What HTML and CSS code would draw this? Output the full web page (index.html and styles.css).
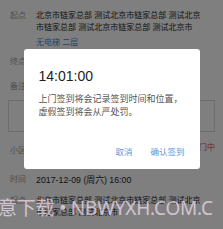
FILE: index.html
```html
<!DOCTYPE html>
<html lang="zh">
<head>
<meta charset="utf-8">
<link rel="stylesheet" href="styles.css">
</head>
<body>
<div class="page">
  <div class="row r1">
    <div class="label">起点</div>
    <div class="value">
      <div>北京市链家总部 测试北京市链家总部 测试北京</div>
      <div>市链家总部 测试北京市链家总部 测试北京市</div>
      <div class="tag">无电梯 二层</div>
    </div>
  </div>
  <div class="row r2">
    <div class="label">终点</div>
    <div class="value">北京市链家总部 测试北京市</div>
  </div>
  <div class="row r3">
    <div class="label">备注</div>
  </div>
  <div class="box"></div>
  <div class="row r4">
    <div class="label">小区</div>
    <div class="value grow"></div>
    <div class="red">门中</div>
  </div>
  <div class="row r5">
    <div class="label">时间</div>
    <div class="value date">2017-12-09 (周六) 16:00</div>
  </div>
  <div class="row r6">
    <div class="label">起点</div>
    <div class="value">
      <div>北京市链家总部 测试北京市链家总部 测试北京</div>
      <div>市链家总部 测试北京市</div>
    </div>
  </div>
</div>
<div class="mask">
  <div class="dialog">
    <div class="time">14:01:00</div>
    <div class="msg">上门签到将会记录签到时间和位置，<br>虚假签到将会从严处罚。</div>
    <div class="actions">
      <span class="btn">取消</span>
      <span class="btn">确认签到</span>
    </div>
  </div>
</div>
<div class="watermark">意下载 • NBWYXH.COM.C</div>
</body>
</html>
```
FILE: styles.css
```css
html, body {
  margin: 0;
  padding: 0;
  width: 223px;
  height: 229px;
  overflow: hidden;
  background: #fff;
  font-family: "Liberation Sans", "Noto Sans CJK SC", sans-serif;
}
.page {
  padding: 10px 8px 0 10px;
  font-size: 8px;
  line-height: 12px;
  color: #262626;
}
.row {
  display: flex;
}
.label {
  width: 26px;
  flex: none;
  color: #9a9a9a;
}
.value {
  flex: 1;
  white-space: nowrap;
}
.tag {
  margin-top: 3px;
  color: #4a86d8;
}
.r2 { margin-top: 7px; }
.r3 { margin-top: 13px; }
.box {
  margin: 7px 0 0 -2px;
  height: 30px;
  border: 1px solid #d8d8d8;
}
.r4 { margin-top: 13px; align-items: center; }
.grow { flex: 1; }
.red {
  color: #e0463a;
  margin-top: -6px;
}
.r5 { margin-top: 17px; }
.date { font-size: 8.8px; }
.r6 { margin-top: 9px; }
.mask {
  position: absolute;
  inset: 0;
  background: rgba(0, 0, 0, 0.5);
  display: flex;
  justify-content: center;
  align-items: flex-start;
  padding-top: 49px;
}
.dialog {
  width: 176px;
  height: 120px;
  box-sizing: border-box;
  background: #fff;
  border-radius: 3px;
  padding: 19px 15px 0 15px;
  display: flex;
  flex-direction: column;
}
.time {
  font-size: 14px;
  line-height: 16px;
  color: #222;
}
.msg {
  margin-top: 9px;
  font-size: 9px;
  line-height: 13px;
  color: #555;
  white-space: nowrap;
}
.actions {
  margin-top: auto;
  margin-bottom: 12px;
  display: flex;
  justify-content: flex-end;
  gap: 18px;
  font-size: 8.5px;
  line-height: 10px;
}
.btn {
  color: #5a95e0;
}
.watermark {
  position: absolute;
  left: -2px;
  top: 197px;
  font-size: 19px;
  line-height: 22px;
  color: rgba(250, 225, 248, 0.7);
  white-space: nowrap;
  font-family: "Noto Sans", "Noto Sans CJK SC", sans-serif;
  letter-spacing: -0.2px;
}
```
